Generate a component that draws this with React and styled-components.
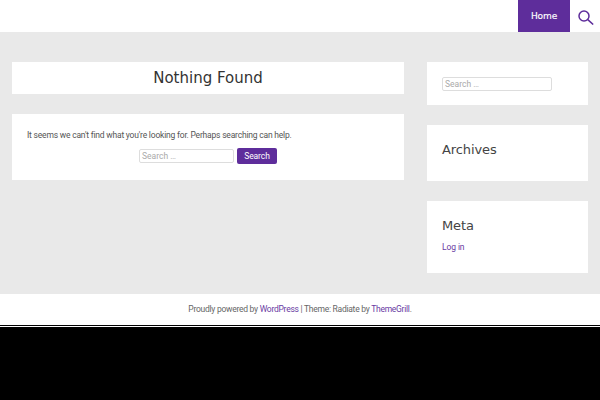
import React from "react";
import styled, { createGlobalStyle } from "styled-components";

const Global = createGlobalStyle`
  html, body { margin: 0; padding: 0; background: #000; }
  body { font-family: Roboto, sans-serif; overflow: hidden; }
  * { box-sizing: border-box; }
`;
const Page = styled.div`width: 600px; height: 325px; background: #e9e9e9; display: flex; flex-direction: column;`;
const Header = styled.header`height: 32px; background: #fff; display: flex; justify-content: flex-end;`;
const NavItem = styled.a`width: 52px; background: #5e2d9b; color: #fff; font-family: "DejaVu Sans", sans-serif; font-size: 9px; letter-spacing: -0.1px; -webkit-text-stroke: 0.15px #fff; padding-bottom: 1px; display: flex; align-items: center; justify-content: center;`;
const SearchToggle = styled.div`width: 30px; padding: 10px 0 0 8px; color: #5e2d9b;`;
const Main = styled.main`flex: 1; display: flex; justify-content: space-between; padding: 30px 12px 0;`;
const Column = styled.div`width: ${p => p.$w}px; display: flex; flex-direction: column; gap: 20px;`;
const Card = styled.section`background: #fff; height: ${p => p.$h}px; padding: ${p => p.$pad || "0 15px"};`;
const Title = styled.h1`margin: 0; height: 32px; line-height: 32px; font-family: "DejaVu Sans", sans-serif; font-size: 15px; font-weight: 400; text-align: center; color: #333;`;
const Text = styled.p`margin: 0; font-size: 8.5px; letter-spacing: -0.2px; line-height: 12px; color: #555;`;
const SearchRow = styled.div`display: flex; justify-content: center; align-items: center; gap: 3px; margin-top: 7px;`;
const Input = styled.div`width: ${p => p.$w}px; height: 14px; border: 1px solid #ddd; border-radius: 2px; font-size: 8.5px; line-height: 12px; color: #aaa; padding-left: 2px;`;
const Button = styled.div`width: 40px; height: 16px; background: #5e2d9b; color: #fff; border-radius: 2px; font-size: 8.5px; letter-spacing: -0.1px; display: flex; align-items: center; justify-content: center;`;
const WidgetTitle = styled.h3`margin: 1px 0 0; font-family: "DejaVu Sans", sans-serif; font-size: 13px; letter-spacing: -0.1px; font-weight: 400; color: #444; line-height: 18px;`;
const Link = styled.a`color: #6a3ba3;`;
const SideLink = styled.a`display: block; color: #6a3ba3; font-size: 8.5px; letter-spacing: -0.1px; margin-top: 7px;`;
const Footer = styled.footer`height: 31px; background: #fff; font-size: 8.5px; letter-spacing: -0.26px; color: #666; text-align: center; line-height: 30px;`;
const Rule = styled.div`width: 600px; height: 1px; background: #fff; margin-top: 1px;`;

export default function App() {
  return (
    <>
      <Global />
      <Page>
        <Header>
          <NavItem>Home</NavItem>
          <SearchToggle>
            <svg width="16" height="15" viewBox="0 0 16 15" fill="none" stroke="currentColor" strokeWidth="1.5"><circle cx="6" cy="6" r="5" /><path d="M9.8 9.6l5.4 4.9" /></svg>
          </SearchToggle>
        </Header>
        <Main>
          <Column $w={392}>
            <Card $h={32}><Title>Nothing Found</Title></Card>
            <Card $h={66} $pad="15px">
              <Text>It seems we can't find what you're looking for. Perhaps searching can help.</Text>
              <SearchRow><Input $w={95}>Search …</Input><Button>Search</Button></SearchRow>
            </Card>
          </Column>
          <Column $w={161}>
            <Card $h={43} $pad="15px"><Input $w={110}>Search …</Input></Card>
            <Card $h={56} $pad="15px"><WidgetTitle>Archives</WidgetTitle></Card>
            <Card $h={72} $pad="15px"><WidgetTitle>Meta</WidgetTitle><SideLink>Log in</SideLink></Card>
          </Column>
        </Main>
        <Footer>Proudly powered by <Link>WordPress</Link> | Theme: Radiate by <Link>ThemeGrill</Link>.</Footer>
      </Page>
      <Rule />
    </>
  );
}
